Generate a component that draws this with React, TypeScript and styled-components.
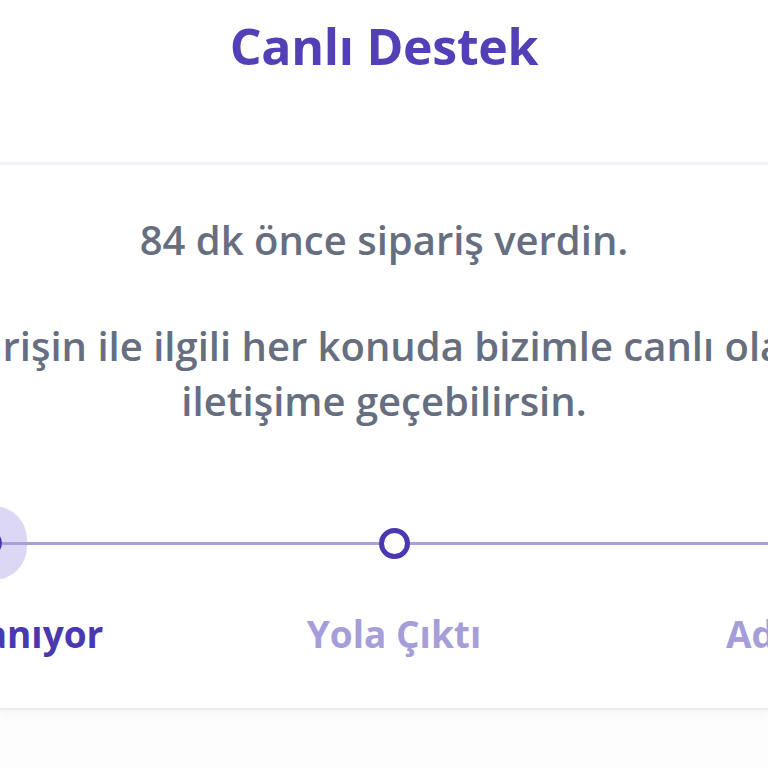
import React from "react";
import styled, { createGlobalStyle } from "styled-components";

const Global = createGlobalStyle`
  html, body { margin: 0; padding: 0; background: #fdfdfd; }
  body { font-family: "Open Sans", "Noto Sans", sans-serif; overflow: hidden; }
`;

const Page = styled.div`
  width: 768px;
  height: 768px;
  overflow: hidden;
  display: flex;
  flex-direction: column;
  background: #fdfdfd;
`;

const Header = styled.header`
  background: #ffffff;
  padding-top: 16px;
  height: 165px;
  flex-shrink: 0;
  box-sizing: border-box;
  border-bottom: 3px solid #f3f2fb;
  display: flex;
  justify-content: center;
`;

const Title = styled.h1`
  margin: 0;
  font-size: 50px;
  line-height: 60px;
  font-weight: 700;
  color: #5340b7;
  letter-spacing: -0.3px;
`;

const Card = styled.section`
  background: #ffffff;
  display: flex;
  justify-content: center;
  border-bottom: 2px solid #ebebf1;
  box-shadow: 0 4px 10px rgba(40, 40, 80, 0.04);
  padding: 47px 0 0;
  height: 545px;
  flex-shrink: 0;
  box-sizing: border-box;
`;

const Inner = styled.div`
  flex-shrink: 0;
  width: 1240px;
  display: flex;
  flex-direction: column;
  align-items: center;
`;

const Text = styled.p<{ $gap?: number }>`
  margin: 0 0 ${(p) => p.$gap ?? 0}px;
  width: 1000px;
  text-align: center;
  font-size: 40px;
  line-height: 55px;
  font-weight: 600;
  color: #666e80;
`;

const Steps = styled.div`
  margin: 98px 0 0 20px;
  display: grid;
  grid-template-columns: repeat(3, 404px);
`;

const Step = styled.div`
  display: flex;
  flex-direction: column;
  align-items: center;
  gap: 49px;
`;

const Track = styled.div`
  width: 100%;
  height: 34px;
  display: flex;
  align-items: center;
`;

const Segment = styled.div<{ $hidden?: boolean }>`
  flex: 1;
  height: 3px;
  background: ${(p) => (p.$hidden ? "transparent" : "#a99fdb")};
`;

const Dot = styled.div<{ $state: "active" | "next" | "todo" }>`
  flex-shrink: 0;
  box-sizing: border-box;
  border-radius: 50%;
  ${(p) =>
    p.$state === "active"
      ? `width: 24px; height: 24px; background: #4a38b0; box-shadow: 0 0 0 25px #dcd7f4;`
      : p.$state === "next"
      ? `width: 31px; height: 31px; background: #fff; border: 5px solid #4a38b0;`
      : `width: 31px; height: 31px; background: #fff; border: 5px solid #a99fdb;`}
`;

const Label = styled.span<{ $active?: boolean }>`
  font-size: 37px;
  line-height: 50px;
  font-weight: 700;
  color: ${(p) => (p.$active ? "#4a38b0" : "#a69ed8")};
  white-space: nowrap;
`;

const steps: { label: string; state: "active" | "next" | "todo" }[] = [
  { label: "Hazırlanıyor", state: "active" },
  { label: "Yola Çıktı", state: "next" },
  { label: "Adreste", state: "todo" },
];

export default function App() {
  return (
    <>
      <Global />
      <Page>
        <Header>
          <Title>Canlı Destek</Title>
        </Header>
        <Card>
          <Inner>
            <Text $gap={51}>84 dk önce sipariş verdin.</Text>
            <Text>
              Siparişin ile ilgili her konuda bizimle canlı olarak iletişime geçebilirsin.
            </Text>
            <Steps>
              {steps.map((s, i) => (
                <Step key={s.label}>
                  <Track>
                    <Segment $hidden={i === 0} />
                    <Dot $state={s.state} />
                    <Segment $hidden={i === steps.length - 1} />
                  </Track>
                  <Label $active={s.state === "active"}>{s.label}</Label>
                </Step>
              ))}
            </Steps>
          </Inner>
        </Card>
      </Page>
    </>
  );
}
